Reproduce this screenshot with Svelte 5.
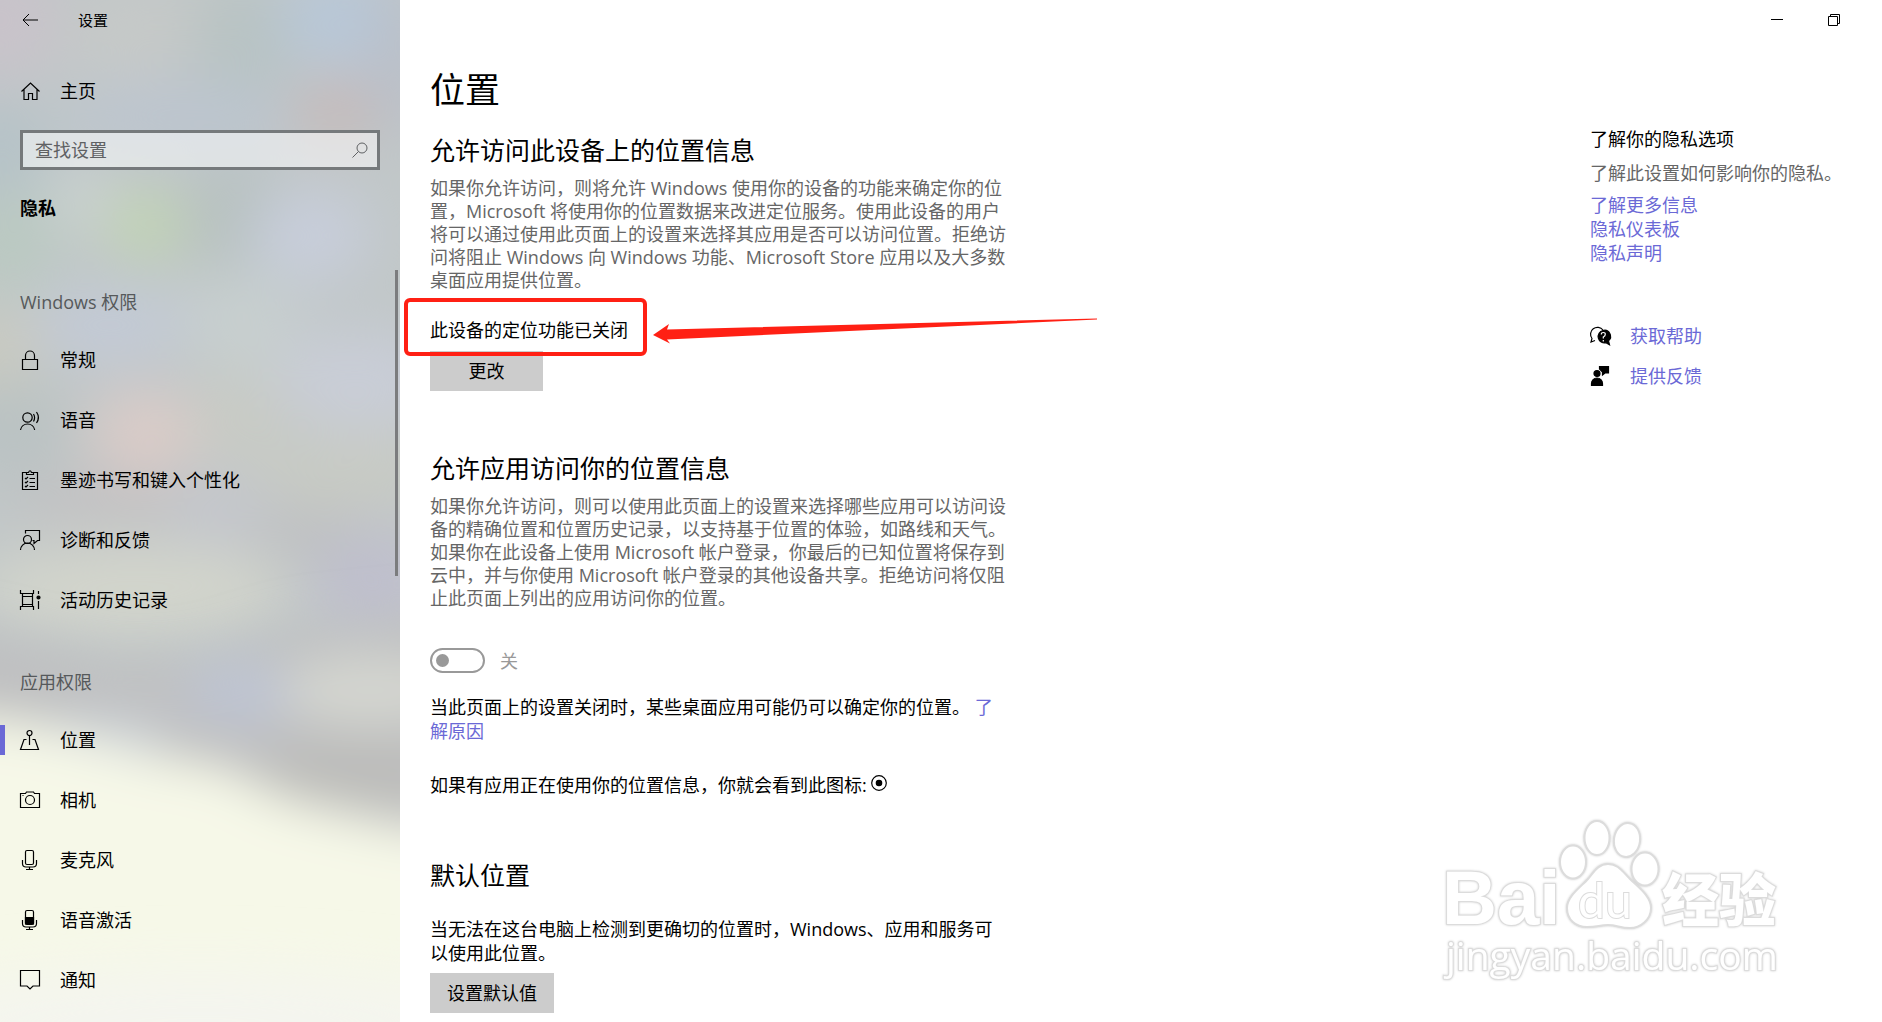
<script>
  // App.svelte — Settings window, privacy > location page

  const windowsItems = [
    { icon: 'lock', label: '常规' },
    { icon: 'speech', label: '语音' },
    { icon: 'clipboard', label: '墨迹书写和键入个性化' },
    { icon: 'feedback', label: '诊断和反馈' },
    { icon: 'history', label: '活动历史记录' },
  ];

  const appItems = [
    { icon: 'location', label: '位置', active: true },
    { icon: 'camera', label: '相机' },
    { icon: 'mic', label: '麦克风' },
    { icon: 'micActive', label: '语音激活' },
    { icon: 'bubble', label: '通知' },
  ];

  const groups = [
    { title: 'Windows 权限', items: windowsItems },
    { title: '应用权限', items: appItems },
  ];

  const moreLinks = ['了解更多信息', '隐私仪表板', '隐私声明'];

  let query = $state('');
  let allowApps = $state(false);
</script>

{#snippet icon(name)}
  <svg class="icon" viewBox="0 0 20 20" aria-hidden="true">
    {#if name === 'home'}
      <path d="M1.5 10.5 10.5 2l9 8.5M4 8.5v10h4.5v-6h4v6H17v-10" />
    {:else if name === 'lock'}
      <path d="M2.5 9.5h15v10h-15zM5.5 9.5v-4a4.5 4.5 0 0 1 9 0v4" />
    {:else if name === 'speech'}
      <circle cx="7.5" cy="7.5" r="4.7" />
      <path d="M.5 20a7.2 7.2 0 0 1 14.2 0M13.5 4q2.2 3.5 0 7.5M16.5 2q3.8 5.5 0 11" />
    {:else if name === 'clipboard'}
      <path d="M6.5 2.5h-4v17h15v-17h-4M6.5 4.5v-2h2q1.5-3.5 3 0h2v2z" />
      <path d="M9.5 8.5H15M9.5 12.5H15M9.5 16.5H15M5 8l1 1 2-2M5 12l1 1 2-2M5 16l1 1 2-2" />
    {:else if name === 'feedback'}
      <circle cx="7.5" cy="9.5" r="4" />
      <path d="M.5 20a7 7 0 0 1 14 0M5.5 3.5v-3h14v10h-2l-3.5 3v-3h-1.5" />
    {:else if name === 'history'}
      <path d="M.5 0v3.5h13V0M2.5 3.5v13M12.5 3.5v13M2.5 6.5h10M2.5 14.5h10M.5 20v-3.5h13V20M18.5 1v3M18.5 11v8" />
      <circle class="solid" cx="18.5" cy="7.5" r="1.5" />
    {:else if name === 'location'}
      <circle cx="9.5" cy="3" r="2.5" />
      <path d="M9.5 5.5V15M6.5 9.5H4l-3.5 10h18l-3.5-10h-2.5" />
    {:else if name === 'camera'}
      <path d="M.5 3.5h5l1-1.5h7l1 1.5h5v14H.5z" />
      <circle cx="10" cy="10" r="4.5" />
      <path d="M2.5 5.5h1" />
    {:else if name === 'mic'}
      <rect x="5.5" y=".5" width="8" height="14" rx="1.5" />
      <path d="M2.5 10v3.5q0 3.5 3.5 3.5h7q3.5 0 3.5-3.5V10M9.5 17v2.5M6 19.5h7" />
    {:else if name === 'micActive'}
      <rect x="5.5" y=".5" width="8" height="14" rx="1.5" />
      <path class="solid" d="M5.5 7.5h8V14h-8z" />
      <path d="M2.5 10v3.5q0 3.5 3.5 3.5h7q3.5 0 3.5-3.5V10M9.5 17v2.5M6 19.5h7" />
    {:else if name === 'bubble'}
      <path d="M.5.5h19V16H13l-3 3-3-3H.5z" />
    {:else if name === 'help'}
      <path d="M5 14.5 1 16l1-3.5A6.5 6.5 0 1 1 13 4" />
      <path class="solid" d="M13 4.5a6 6 0 1 0 3 12.3l3.5 2-1-4A6 6 0 0 0 13 4.5z" />
      <path class="mark" d="M11.3 8.5q0-2 2-2t2 1.8-2 2.7v1.5M13.3 14v1.5" />
    {:else if name === 'person'}
      <circle class="solid" cx="7" cy="7.5" r="3" />
      <path class="solid" d="M1.5 19.5v-2a5.5 5.5 0 0 1 11 0v2zM9.5.5h9V7H15l-2.5 2V6l-3-3z" />
    {/if}
  </svg>
{/snippet}

<div class="window">
  <aside class="sidebar">
    <!-- acrylic backdrop -->
    <svg class="acrylic" viewBox="0 0 400 1022" preserveAspectRatio="none" aria-hidden="true">
      <defs>
        <filter id="haze" filterUnits="userSpaceOnUse" x="-200" y="-200" width="800" height="1500">
          <feGaussianBlur stdDeviation="28" />
        </filter>
        <filter id="edge" filterUnits="userSpaceOnUse" x="-200" y="400" width="800" height="1000">
          <feGaussianBlur stdDeviation="24" />
        </filter>
      </defs>
      <rect width="400" height="1022" fill="#c1c7c8" />
      <g filter="url(#haze)">
        <ellipse cx="0" cy="20" rx="60" ry="60" fill="#c9c3ca" />
        <ellipse cx="150" cy="40" rx="80" ry="50" fill="#c6c9c8" />
        <ellipse cx="240" cy="60" rx="50" ry="80" fill="#b8c3c3" />
        <ellipse cx="340" cy="20" rx="60" ry="50" fill="#b8c7d8" />
        <ellipse cx="400" cy="60" rx="30" ry="80" fill="#b9bfc9" />
        <ellipse cx="180" cy="115" rx="120" ry="35" fill="#bcc5cf" />
        <ellipse cx="335" cy="110" rx="40" ry="28" fill="#c7b7b6" />
        <ellipse cx="0" cy="150" rx="50" ry="50" fill="#b5c2c8" />
        <ellipse cx="10" cy="240" rx="50" ry="50" fill="#bac9c1" />
        <ellipse cx="80" cy="200" rx="30" ry="30" fill="#ccd4d2" />
        <ellipse cx="145" cy="225" rx="38" ry="35" fill="#c1d5b2" />
        <ellipse cx="235" cy="220" rx="50" ry="60" fill="#b7c1c0" />
        <ellipse cx="310" cy="235" rx="60" ry="45" fill="#c8cedb" />
        <ellipse cx="110" cy="325" rx="80" ry="35" fill="#c3cad7" />
        <ellipse cx="0" cy="350" rx="40" ry="40" fill="#cbcbbf" />
        <ellipse cx="240" cy="320" rx="60" ry="50" fill="#c7cfcf" />
        <ellipse cx="360" cy="380" rx="90" ry="50" fill="#c9cdd7" />
        <ellipse cx="10" cy="430" rx="60" ry="50" fill="#bac2c3" />
        <ellipse cx="145" cy="432" rx="55" ry="42" fill="#dcccc8" />
        <ellipse cx="240" cy="420" rx="50" ry="50" fill="#c8cbc5" />
        <ellipse cx="110" cy="500" rx="100" ry="25" fill="#c3c1c2" />
        <ellipse cx="350" cy="470" rx="100" ry="40" fill="#c8cbc4" />
        <ellipse cx="220" cy="510" rx="50" ry="30" fill="#c4c6cd" />
        <ellipse cx="310" cy="535" rx="60" ry="25" fill="#bebfc1" />
        <ellipse cx="130" cy="590" rx="160" ry="45" fill="#d3d5cc" />
        <ellipse cx="375" cy="585" rx="60" ry="55" fill="#bfbfcd" />
      </g>
      <g filter="url(#edge)">
        <path d="M-80 620 120 665 200 660 300 630 500 610V1100H-80z" fill="#bfc0c1" />
        <ellipse cx="245" cy="693" rx="60" ry="30" fill="#bec4d3" />
        <ellipse cx="370" cy="690" rx="90" ry="35" fill="#d4d6d0" />
        <ellipse cx="100" cy="735" rx="70" ry="20" fill="#cbd0d5" />
        <ellipse cx="350" cy="775" rx="90" ry="30" fill="#bcbcb9" />
        <path d="M-80 712 20 722 130 752 220 768 290 802 400 828 500 836V1200H-80z" fill="#f6f8e8" />
      </g>
      <ellipse cx="200" cy="1022" rx="320" ry="50" fill="#f4f5ef" filter="url(#haze)" />
    </svg>

    <header class="titlebar">
      <button class="back" aria-label="返回">
        <svg class="arrow" viewBox="0 0 16 14" aria-hidden="true">
          <path d="M7 1 1 7l6 6M1 7h15" />
        </svg>
      </button>
      <span>设置</span>
    </header>

    <a class="item home" href="#home">
      {@render icon('home')}
      <span>主页</span>
    </a>

    <label class="search">
      <input type="text" placeholder="查找设置" aria-label="查找设置" bind:value={query} />
      <svg class="glass" viewBox="0 0 16 16" aria-hidden="true">
        <circle cx="10" cy="6" r="5" />
        <path d="M6.5 9.5.5 15.5" />
      </svg>
    </label>

    <h2 class="category">隐私</h2>

    <div class="scroller">
      {#each groups as group}
        <nav class="group" aria-label={group.title}>
          <h3>{group.title}</h3>
          {#each group.items as item}
            <a class="item" class:active={item.active} href="#{item.icon}">
              {@render icon(item.icon)}
              <span>{item.label}</span>
            </a>
          {/each}
        </nav>
      {/each}
      <div class="thumb"></div>
    </div>
  </aside>

  <div class="page">
    <div class="controls">
      <button aria-label="最小化">
        <svg viewBox="0 0 12 12" aria-hidden="true"><path d="M0 5.5h12" /></svg>
      </button>
      <button aria-label="还原">
        <svg viewBox="0 0 12 12" aria-hidden="true"><path d="M.5 2.5h9v9h-9zM2.5 2.5v-2h9v9h-2" /></svg>
      </button>
    </div>

    <div class="columns">
      <main>
        <h1>位置</h1>

        <section>
          <h2>允许访问此设备上的位置信息</h2>
          <p class="muted">
            如果你允许访问&#xFF0C;则将允许 Windows 使用你的设备的功能来确定你的位置&#xFF0C;Microsoft 将使用你的位置数据来改进定位服务。使用此设备的用户将可以通过使用此页面上的设置来选择其应用是否可以访问位置。拒绝访问将阻止 Windows 向 Windows 功能、Microsoft Store 应用以及大多数桌面应用提供位置。
          </p>
          <div class="status">
            <p>此设备的定位功能已关闭</p>
            <div class="highlight"></div>
            <svg class="pointer" viewBox="0 0 446 20" aria-hidden="true">
              <path d="M0 11 16 0l-2 5.5L444-5.5v1L14 15.5l3 4z" />
            </svg>
          </div>
          <button class="btn change">更改</button>
        </section>

        <section class="apps">
          <h2>允许应用访问你的位置信息</h2>
          <p class="muted">
            如果你允许访问&#xFF0C;则可以使用此页面上的设置来选择哪些应用可以访问设备的精确位置和位置历史记录&#xFF0C;以支持基于位置的体验&#xFF0C;如路线和天气。如果你在此设备上使用 Microsoft 帐户登录&#xFF0C;你最后的已知位置将保存到云中&#xFF0C;并与你使用 Microsoft 帐户登录的其他设备共享。拒绝访问将仅阻止此页面上列出的应用访问你的位置。
          </p>
          <label class="toggle">
            <input type="checkbox" role="switch" disabled bind:checked={allowApps} />
            <span>{allowApps ? '开' : '关'}</span>
          </label>
          <p>当此页面上的设置关闭时&#xFF0C;某些桌面应用可能仍可以确定你的位置。 <a href="#why">了解原因</a></p>
          <p class="hint">
            如果有应用正在使用你的位置信息&#xFF0C;你就会看到此图标:
            <svg class="target" viewBox="0 0 16 16" aria-hidden="true">
              <circle cx="8" cy="8" r="7.3" />
              <circle class="solid" cx="8" cy="8" r="2.7" />
            </svg>
          </p>
        </section>

        <section class="default">
          <h2>默认位置</h2>
          <p>当无法在这台电脑上检测到更确切的位置时&#xFF0C;Windows、应用和服务可以使用此位置。</p>
          <button class="btn">设置默认值</button>
        </section>
      </main>

      <aside class="related">
        <h4>了解你的隐私选项</h4>
        <p>了解此设置如何影响你的隐私。</p>
        {#each moreLinks as link}
          <a href="#more">{link}</a>
        {/each}
        <div class="support">
          <a href="#help">{@render icon('help')}获取帮助</a>
          <a href="#feedback">{@render icon('person')}提供反馈</a>
        </div>
      </aside>
    </div>

    <svg class="watermark" viewBox="0 0 340 164" aria-hidden="true">
      <g class="logo">
        <text class="latin" x="2" y="110">Bai</text>
        <ellipse cx="133" cy="48" rx="13" ry="16.5" />
        <ellipse cx="157" cy="24" rx="12.5" ry="17" />
        <ellipse cx="187" cy="26" rx="13" ry="17" transform="rotate(8 187 26)" />
        <ellipse cx="205" cy="55" rx="13.5" ry="16.5" />
        <path d="M168 50c-10 0-14 8-20 15s-21 17-21 29 9 19 20 19 12-2 21-2 12 3 22 3 21-8 21-20-13-21-21-29-12-15-22-15z" />
        <text class="du" x="138" y="104">du</text>
        <text class="cn" x="222" y="107">经验</text>
      </g>
      <text class="url" x="6" y="156">jingyan.baidu.com</text>
    </svg>
  </div>
</div>

<style>
  :global(body) {
    background: #fff;
  }

  .window {
    display: flex;
    min-height: 100vh;
    font-family: 'Open Sans', 'Noto Sans CJK SC', sans-serif;
    font-size: 18px;
    font-weight: 400;
    line-height: 24px;
    color: #000;
  }

  h1, h2, h3, h4, p {
    margin: 0;
    font-weight: 400;
  }

  a {
    color: #6b69d6;
    text-decoration: none;
  }

  button {
    border: 0;
    font: inherit;
    color: inherit;
  }

  svg {
    fill: none;
    stroke: currentColor;
  }

  .solid {
    fill: currentColor;
  }

  /* sidebar */
  .sidebar {
    position: relative;
    flex: 0 0 400px;
    overflow: hidden;
  }

  .sidebar > * {
    position: relative;
  }

  .sidebar > .acrylic {
    position: absolute;
    inset: 0;
    width: 100%;
    height: 100%;
    stroke: none;
  }

  .titlebar {
    display: flex;
    align-items: center;
    height: 40px;
    font-size: 15px;
  }

  .back {
    display: flex;
    width: 78px;
    padding: 0 22px;
    background: none;
  }

  .arrow {
    width: 16px;
    height: 14px;
  }

  .item {
    display: flex;
    align-items: center;
    gap: 20px;
    height: 60px;
    padding: 0 20px;
    color: #000;
  }

  .home {
    margin: 21px 0 9px;
  }

  .item.active {
    position: relative;
  }

  .item.active::before {
    content: '';
    position: absolute;
    left: 0;
    top: 15px;
    width: 5px;
    height: 30px;
    background: #6b69d6;
  }

  .icon {
    flex: none;
    width: 20px;
    height: 20px;
    overflow: visible;
    stroke-width: 1.2;
  }

  .search {
    display: flex;
    align-items: center;
    height: 40px;
    margin: 0 20px;
    padding: 0 9px 0 12px;
    box-sizing: border-box;
    border: 3px solid #75797b;
    background: rgba(255, 255, 255, 0.5);
  }

  .search input {
    flex: 1;
    min-width: 0;
    padding: 0;
    border: 0;
    outline: 0;
    background: none;
    font: inherit;
  }

  .search input::placeholder {
    color: #5f6163;
    opacity: 1;
  }

  .glass {
    width: 16px;
    height: 16px;
    color: #5f6163;
  }

  .category {
    padding: 26px 20px 0;
    font-size: 18px;
    font-weight: 700;
  }

  .scroller {
    padding-top: 50px;
  }

  .group {
    padding-bottom: 20px;
  }

  .group:last-of-type {
    padding-bottom: 0;
  }

  .group h3 {
    padding: 20px 20px 16px;
    font-size: 18px;
    color: #56595b;
  }

  .thumb {
    position: absolute;
    top: 50px;
    right: 2px;
    width: 3px;
    height: 306px;
    background: #7b7c7e;
  }

  /* content */
  .page {
    position: relative;
    flex: 1;
    min-width: 0;
  }

  .controls {
    display: flex;
    justify-content: flex-end;
    gap: 45px;
    height: 40px;
    padding-right: 42px;
  }

  .controls button {
    padding: 0;
    background: none;
  }

  .controls svg {
    display: block;
    width: 12px;
    height: 12px;
  }

  .columns {
    display: flex;
    justify-content: space-between;
    padding: 24px 32px 4px 30px;
  }

  main {
    flex: 0 1 578px;
  }

  h1 {
    font-size: 35px;
    line-height: 52px;
  }

  main h2 {
    font-size: 25px;
    line-height: 36px;
  }

  section:first-of-type {
    padding-top: 16px;
  }

  .muted {
    margin-top: 9px;
    line-height: 23px;
    color: #666;
  }

  .status {
    position: relative;
    padding: 26px 0 9px;
  }

  .highlight {
    position: absolute;
    top: 6px;
    left: -26px;
    width: 243px;
    height: 58px;
    box-sizing: border-box;
    border: 4px solid #ff2014;
    border-radius: 6px;
    z-index: 1;
  }

  .pointer {
    position: absolute;
    top: 32px;
    left: 223px;
    width: 446px;
    height: 20px;
    overflow: visible;
    stroke: none;
    fill: #ff2014;
  }

  .btn {
    height: 40px;
    padding: 0 17px;
    background: #ccc;
  }

  .change {
    width: 113px;
  }

  .apps {
    padding-top: 59px;
  }

  .toggle {
    display: flex;
    align-items: center;
    gap: 15px;
    margin: 38px 0 22px;
    color: #999;
  }

  .toggle input {
    appearance: none;
    display: flex;
    align-items: center;
    width: 55px;
    height: 25px;
    margin: 0;
    padding: 0 4px;
    box-sizing: border-box;
    border: 2px solid #999;
    border-radius: 13px;
  }

  .toggle input::before {
    content: '';
    width: 13px;
    height: 13px;
    border-radius: 50%;
    background: #999;
  }

  .toggle input:checked {
    justify-content: flex-end;
  }

  .hint {
    margin-top: 30px;
  }

  .target {
    width: 16px;
    height: 16px;
    padding-top: 2px;
    stroke-width: 1.2;
    vertical-align: top;
  }

  .default {
    padding-top: 60px;
  }

  .default p {
    margin: 24px 0 8px;
  }

  /* right column */
  .related {
    flex: 0 0 260px;
    padding-top: 63px;
  }

  .related h4 {
    font-size: 18px;
  }

  .related p {
    margin: 10px 0 8px;
    color: #666;
    white-space: nowrap;
  }

  .related a {
    display: block;
  }

  .support {
    display: grid;
    gap: 16px;
    margin-top: 59px;
  }

  .support a {
    display: flex;
    align-items: center;
    gap: 20px;
  }

  .support .icon {
    color: #000;
  }

  .mark {
    stroke: #fff;
  }

  /* translucent logo floating over the page */
  .watermark {
    position: absolute;
    right: 102px;
    bottom: 44px;
    width: 340px;
    height: 164px;
    overflow: visible;
    pointer-events: none;
    fill: #fff;
    stroke: #dcdcdc;
    stroke-width: 2;
    filter: drop-shadow(0 0 1px #ccc);
  }

  .watermark text {
    font-family: 'Liberation Sans', 'Noto Sans CJK SC', sans-serif;
    font-weight: 700;
    paint-order: stroke;
  }

  .watermark .latin {
    font-size: 76px;
  }

  .watermark .du {
    font-family: Lato, sans-serif;
    font-size: 48px;
    font-weight: 400;
  }

  .watermark .cn {
    font-size: 57px;
    font-weight: 900;
  }

  .watermark .url {
    font-family: 'Open Sans', sans-serif;
    font-size: 39px;
    font-weight: 400;
  }
</style>
